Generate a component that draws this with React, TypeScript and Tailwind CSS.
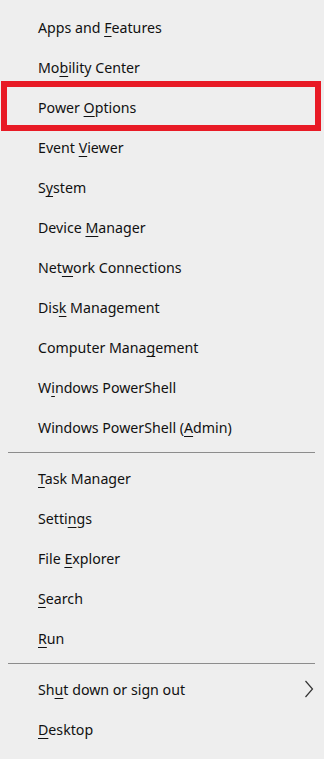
type Item = { pre: string; key: string; post: string; arrow?: boolean; marked?: boolean };

const groups: Item[][] = [
  [
    { pre: "Apps and ", key: "F", post: "eatures" },
    { pre: "Mo", key: "b", post: "ility Center" },
    { pre: "Power ", key: "O", post: "ptions", marked: true },
    { pre: "Event ", key: "V", post: "iewer" },
    { pre: "S", key: "y", post: "stem" },
    { pre: "Device ", key: "M", post: "anager" },
    { pre: "Net", key: "w", post: "ork Connections" },
    { pre: "Dis", key: "k", post: " Management" },
    { pre: "Computer Mana", key: "g", post: "ement" },
    { pre: "W", key: "i", post: "ndows PowerShell" },
    { pre: "Windows PowerShell (", key: "A", post: "dmin)" },
  ],
  [
    { pre: "", key: "T", post: "ask Manager" },
    { pre: "Setti", key: "n", post: "gs" },
    { pre: "File ", key: "E", post: "xplorer" },
    { pre: "", key: "S", post: "earch" },
    { pre: "", key: "R", post: "un" },
  ],
  [
    { pre: "Sh", key: "u", post: "t down or sign out", arrow: true },
    { pre: "", key: "D", post: "esktop" },
  ],
];

function MenuRow({ item }: { item: Item }) {
  return (
    <div className="relative flex h-10 items-center justify-between pl-[38px] pr-[10px]">
      <span className="whitespace-nowrap pt-[2px]">
        {item.pre}
        <u className="underline decoration-1 underline-offset-[3px]">{item.key}</u>
        {item.post}
      </span>
      {item.arrow && (
        <svg width="10" height="18" viewBox="0 0 10 18" className="text-[#333]">
          <polyline points="1.5,1 8.5,9 1.5,17" fill="none" stroke="currentColor" strokeWidth="1.2" />
        </svg>
      )}
      {item.marked && (
        <div className="absolute left-[1px] right-[3px] top-[-6px] bottom-[-4px] border-[6px] border-[#e81a25]" />
      )}
    </div>
  );
}

export default function App() {
  return (
    <div
      className="h-[759px] w-[324px] bg-[#eeeeee] pt-[7px] text-[14.2px] text-[#111]"
      style={{ fontFamily: '"Noto Sans", "Open Sans", sans-serif' }}
    >
      {groups.map((group, i) => (
        <div key={i}>
          {i > 0 && <div className="ml-[8px] mr-[9px] my-[5px] h-px bg-[#8c8c8c]" />}
          {group.map((item) => (
            <MenuRow key={item.pre + item.key} item={item} />
          ))}
        </div>
      ))}
    </div>
  );
}
